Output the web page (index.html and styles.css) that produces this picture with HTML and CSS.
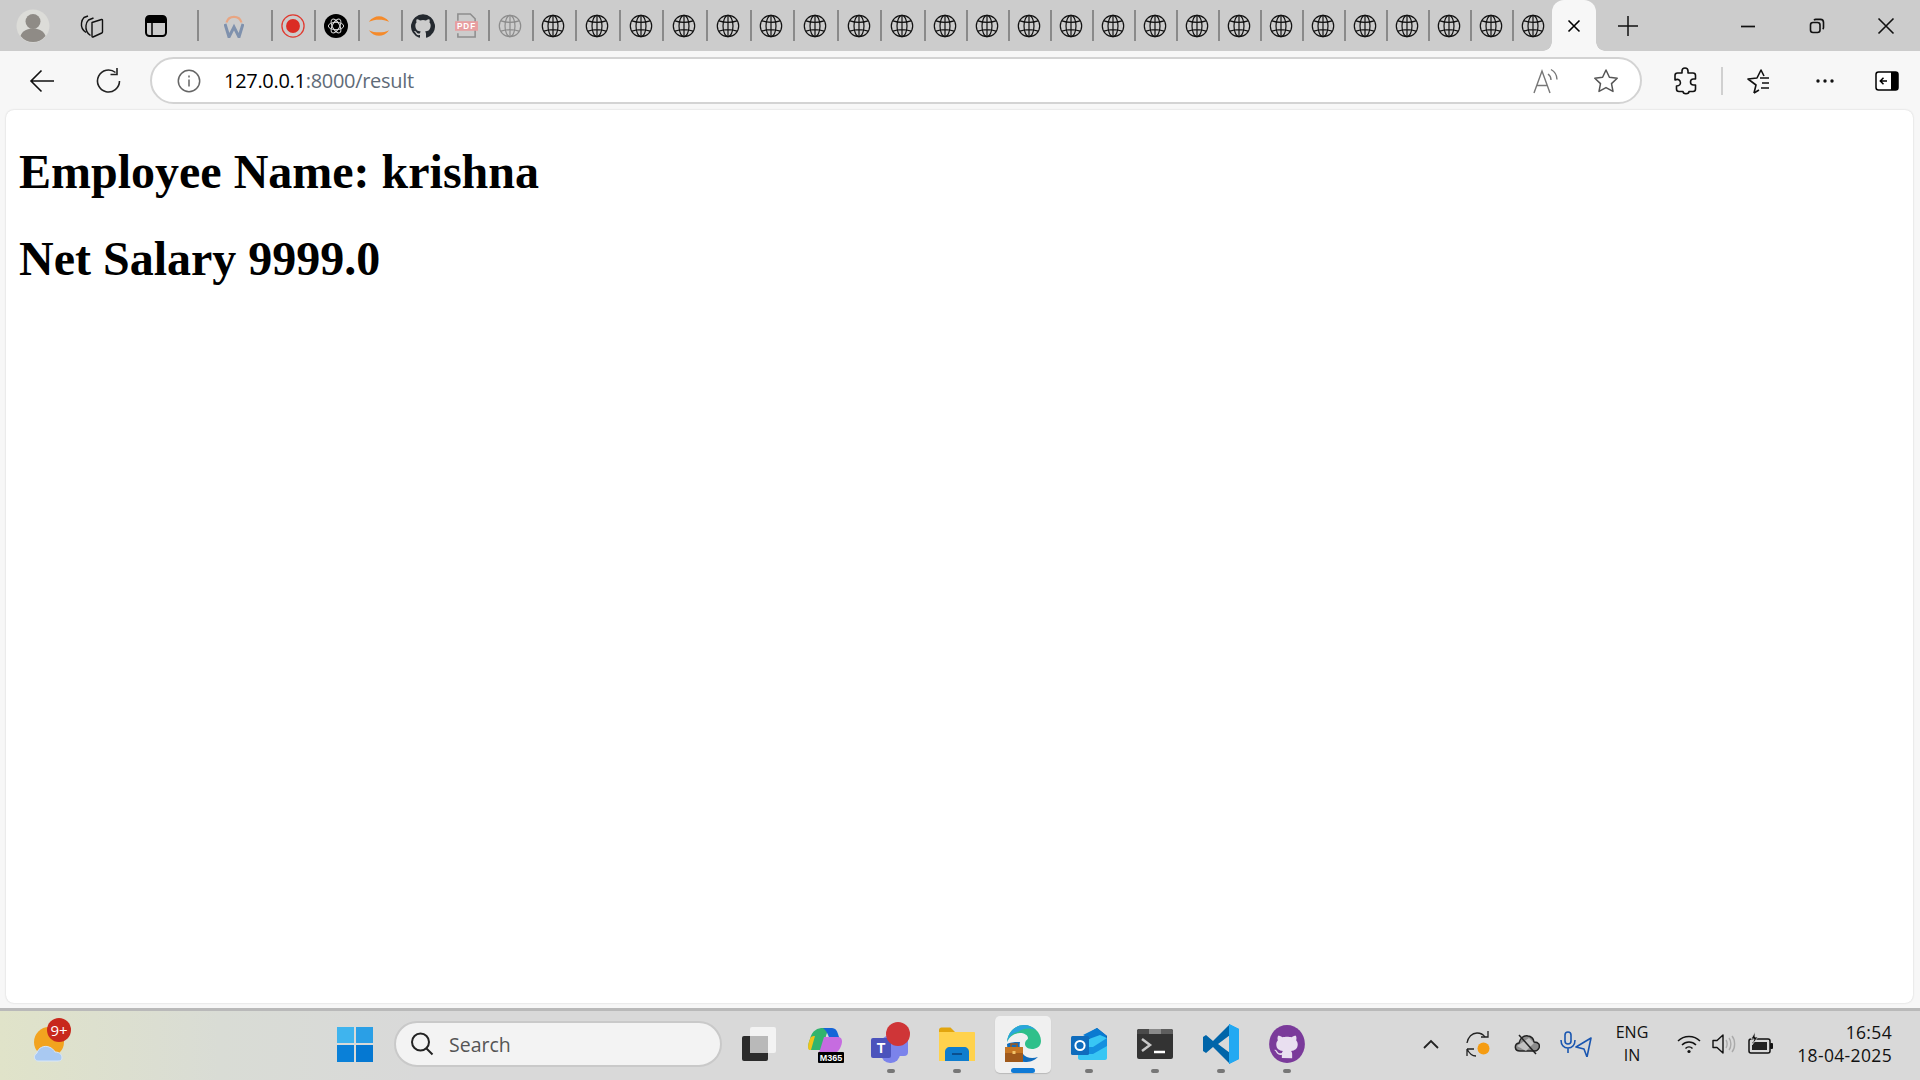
FILE: index.html
```html
<!DOCTYPE html>
<html lang="en">
<head>
<meta charset="utf-8">
<title>127.0.0.1:8000/result</title>
<link rel="stylesheet" href="styles.css">
</head>
<body>
<svg class="defs" width="0" height="0" aria-hidden="true">
  <symbol id="globe" viewBox="0 0 26 26"><g fill="none" stroke="currentColor" stroke-width="1.300"><circle cx="13" cy="13" r="11.600"/><ellipse cx="13" cy="13" rx="5.400" ry="11.600"/><path d="M3.200 7.500c6 2 13.600 2 19.600 0M3.200 18.500c6-2 13.600-2 19.600 0M13 1.500v23"/></g></symbol>
</svg>
<div class="browser">
  <header class="tabbar">
    <span class="avatar"><svg width="34" height="34" viewBox="0 0 34 34"><circle cx="17" cy="17" r="16.500" fill="#dcdcd8"/><circle cx="17" cy="12.500" r="7.500" fill="#8f8b86"/><path d="M4.500 27c2-5.500 7-7.500 12.500-7.500s10.500 2 12.500 7.500a16 16 0 0 1-25 0z" fill="#8f8b86"/></svg></span>
    <span class="side-btn"><svg width="26" height="26" viewBox="0 0 26 26" fill="none" stroke="#111" stroke-width="1.400" stroke-linejoin="round"><path d="M7 19.500C4 17.500 2 14 2.500 10c.3-2.500 1-4 2.500-5.500l4-1.500"/><path d="M11.500 22.500C8.500 20.500 6.500 17 7 12.500c.3-2.500 1-4 2.500-5.500l5-2"/><path d="M13 9.500l9.500-3c.6-.2 1 .1 1 .7V19c0 .5-.2.8-.7 1L14 24c-.6.200-1 0-1-.7V10.500c0-.5 0-.8 0-1z"/></svg></span>
    <span class="side-btn"><svg width="24" height="24" viewBox="0 0 24 24"><rect x="2" y="2" width="20" height="20" rx="3.500" fill="none" stroke="#000" stroke-width="2"/><path d="M5 2h14a3 3 0 0 1 3 3v4H2V5a3 3 0 0 1 3-3z" fill="#000"/><path d="M8 8v14" stroke="#000" stroke-width="1.500"/></svg></span>
    <div class="tabs">
      <span class="tab tab-first"><svg width="20" height="24" viewBox="0 0 20 24"><path d="M2.500 8.500a7.800 7.800 0 0 1 15 0" fill="none" stroke="#e8a582" stroke-width="2.200"/><path d="M1 10l4 13 5-10 5 10 4-13" fill="none" stroke="#7f91ad" stroke-width="3"/></svg></span>
      <span class="tab tab-wide"><svg width="24" height="24" viewBox="0 0 26 26"><circle cx="13" cy="13" r="12" fill="none" stroke="#e03a30" stroke-width="1.400"/><circle cx="13" cy="13" r="7.500" fill="#db2c24"/></svg></span>
      <span class="tab tab-wide"><svg width="24" height="24" viewBox="0 0 25 25"><circle cx="12.500" cy="12.500" r="12.500" fill="#000"/><g fill="none" stroke="#dcdcdc" stroke-width="1"><ellipse cx="12.500" cy="12.500" rx="8" ry="3.800"/><ellipse cx="12.500" cy="12.500" rx="8" ry="3.800" transform="rotate(60 12.500 12.500)"/><ellipse cx="12.500" cy="12.500" rx="8" ry="3.800" transform="rotate(120 12.500 12.500)"/></g></svg></span>
      <span class="tab tab-wide"><svg width="24" height="24" viewBox="0 0 26 26"><path d="M2 8.500C5 4.500 9 2.500 13 2.500s8 2 11 6C20.500 6.800 17 6.200 13 6.200S5.500 6.800 2 8.500z" fill="#f58a2a"/><path d="M2 17.500C5 21.500 9 23.500 13 23.500s8-2 11-6C20.500 19.200 17 19.800 13 19.800S5.500 19.200 2 17.500z" fill="#f58a2a"/></svg></span>
      <span class="tab tab-wide"><svg width="24" height="24" viewBox="0 0 16 16"><path fill="#24292f" d="M8 .2a8 8 0 0 0-2.500 15.600c.4.100.5-.2.500-.4v-1.400c-2.200.5-2.700-1-2.700-1-.4-.9-.9-1.200-.9-1.200-.7-.5.100-.5.100-.5.800.1 1.200.8 1.200.8.700 1.200 1.900.9 2.300.7.100-.5.300-.9.500-1.100-1.800-.2-3.600-.9-3.600-4 0-.9.300-1.600.8-2.100-.1-.2-.4-1 .1-2.100 0 0 .7-.2 2.200.8a7.600 7.600 0 0 1 4 0c1.500-1 2.200-.8 2.200-.8.500 1.100.2 1.900.1 2.100.5.500.8 1.200.8 2.100 0 3.100-1.900 3.800-3.700 4 .3.300.6.800.6 1.500v2.200c0 .2.100.5.500.4A8 8 0 0 0 8 .2z"/></svg></span>
      <span class="tab tab-wide"><svg width="23" height="25" viewBox="0 0 24 26"><path d="M3 8V1h13l5 5v19H3v-4" fill="none" stroke="#8d8d8d" stroke-width="1.600"/><rect x="0" y="8.500" width="24" height="10" fill="#e79ea0"/><text x="12" y="16.500" text-anchor="middle" class="pdf-text">PDF</text></svg></span>
      <span class="tab tab-globe globe-dim"><svg class="globe"><use href="#globe"/></svg></span>
      <span class="tab tab-globe"><svg class="globe"><use href="#globe"/></svg></span>
      <span class="tab tab-globe"><svg class="globe"><use href="#globe"/></svg></span>
      <span class="tab tab-globe"><svg class="globe"><use href="#globe"/></svg></span>
      <span class="tab tab-globe"><svg class="globe"><use href="#globe"/></svg></span>
      <span class="tab tab-globe"><svg class="globe"><use href="#globe"/></svg></span>
      <span class="tab tab-globe"><svg class="globe"><use href="#globe"/></svg></span>
      <span class="tab tab-globe"><svg class="globe"><use href="#globe"/></svg></span>
      <span class="tab tab-globe"><svg class="globe"><use href="#globe"/></svg></span>
      <span class="tab tab-globe"><svg class="globe"><use href="#globe"/></svg></span>
      <span class="tab"><svg class="globe"><use href="#globe"/></svg></span>
      <span class="tab"><svg class="globe"><use href="#globe"/></svg></span>
      <span class="tab"><svg class="globe"><use href="#globe"/></svg></span>
      <span class="tab"><svg class="globe"><use href="#globe"/></svg></span>
      <span class="tab"><svg class="globe"><use href="#globe"/></svg></span>
      <span class="tab"><svg class="globe"><use href="#globe"/></svg></span>
      <span class="tab"><svg class="globe"><use href="#globe"/></svg></span>
      <span class="tab"><svg class="globe"><use href="#globe"/></svg></span>
      <span class="tab"><svg class="globe"><use href="#globe"/></svg></span>
      <span class="tab"><svg class="globe"><use href="#globe"/></svg></span>
      <span class="tab"><svg class="globe"><use href="#globe"/></svg></span>
      <span class="tab"><svg class="globe"><use href="#globe"/></svg></span>
      <span class="tab"><svg class="globe"><use href="#globe"/></svg></span>
      <span class="tab"><svg class="globe"><use href="#globe"/></svg></span>
      <span class="tab"><svg class="globe"><use href="#globe"/></svg></span>
      <span class="tab-active"><svg width="14" height="14" viewBox="0 0 14 14"><path d="M1.500 1.500l11 11M12.500 1.500l-11 11" stroke="#000" stroke-width="1.600"/></svg></span>
      <span class="newtab"><svg width="22" height="22" viewBox="0 0 22 22"><path d="M11 1v20M1 11h20" stroke="#111" stroke-width="1.500"/></svg></span>
    </div>
    <div class="winctl">
      <span class="winbtn"><svg width="16" height="16" viewBox="0 0 16 16"><path d="M1 8.500h14" stroke="#111" stroke-width="1.700"/></svg></span>
      <span class="winbtn"><svg width="16" height="16" viewBox="0 0 16 16" fill="none" stroke="#111" stroke-width="1.600"><rect x="1.500" y="4.500" width="9.500" height="10" rx="2.500"/><path d="M5 2.200c.5-.6 1-.8 1.800-.8h4.700c1.800 0 3 1.200 3 3v5c0 .8-.3 1.300-.8 1.700"/></svg></span>
      <span class="winbtn"><svg width="18" height="18" viewBox="0 0 18 18"><path d="M1.500 1.500l15 15M16.500 1.500l-15 15" stroke="#111" stroke-width="1.600"/></svg></span>
    </div>
  </header>

  <nav class="toolbar">
    <span class="tool tool-back"><svg width="26" height="24" viewBox="0 0 26 24" fill="none" stroke="#111" stroke-width="1.600"><path d="M25 12H2M12.500 1.500L2 12l10.500 10.500"/></svg></span>
    <span class="tool tool-reload"><svg width="26" height="26" viewBox="0 0 26 26" fill="none" stroke="#222" stroke-width="1.600"><path d="M23.500 13A11 11 0 1 1 19.500 4.500"/><path d="M21 0v6.500h-6.500"/></svg></span>
    <div class="addr">
      <svg class="addr-info" width="24" height="24" viewBox="0 0 24 24" fill="none" stroke="#666" stroke-width="1.500"><circle cx="12" cy="12" r="10.700"/><path d="M12 10.500v7M12 6.500v2"/></svg>
      <span class="url"><span class="url-host">127.0.0.1</span>:8000/result</span>
      <svg class="addr-read" width="28" height="26" viewBox="0 0 28 26" fill="none" stroke="#777" stroke-width="1.400"><path d="M2 25L10 3l8 22M5 17.500h10"/><path d="M16 6c2 1.500 3 3.500 3 6M19 1.500c3.500 2 6 5.500 6 10"/></svg>
      <svg class="addr-star" width="26" height="26" viewBox="0 0 26 26" fill="none" stroke="#555" stroke-width="1.500" stroke-linejoin="round"><path d="M13 2l3.400 7.200 7.800 1-5.700 5.400 1.500 7.800L13 19.600l-7 3.800 1.500-7.800L1.800 10.200l7.800-1z"/></svg>
    </div>
    <span class="tool tool-ext"><svg width="24" height="28" viewBox="0 0 24 28" fill="none" stroke="#111" stroke-width="1.600" stroke-linejoin="round"><path d="M9 4c0-4 6-4 6 0v2h5c1.500 0 2.500 1 2.500 2.500V12h-2c-4 0-4 6 0 6h2v4c0 1.500-1 2.500-2.500 2.500H16c0 3-6 3-6 0H6c-1.500 0-2.500-1-2.500-2.500v-3c3 0 5-2 3.500-5-1-1.500-3-2-5-1V8.500C2 7 3 6 4.500 6H9z"/></svg></span>
    <span class="tool-sep"></span>
    <span class="tool tool-fav"><svg width="26" height="28" viewBox="0 0 26 28" fill="none" stroke="#111" stroke-width="1.600" stroke-linejoin="round"><path d="M9 26l2-8-8-6 9-1 4-8 3 6"/><path d="M9 26l5-3M15 11h9M17 16h7M16 21h8"/></svg></span>
    <span class="tool tool-more"><svg width="20" height="4" viewBox="0 0 20 4"><circle cx="3" cy="2" r="1.700" fill="#111"/><circle cx="10" cy="2" r="1.700" fill="#111"/><circle cx="17" cy="2" r="1.700" fill="#111"/></svg></span>
    <span class="tool tool-side"><svg width="24" height="20" viewBox="0 0 24 20"><rect x="1" y="1" width="22" height="18" rx="2.500" fill="#fff" stroke="#000" stroke-width="1.500"/><path d="M16 1h5a2 2 0 0 1 2 2v14a2 2 0 0 1-2 2h-5z" fill="#000"/><path d="M12 10H5.500M8.500 6.800L5.300 10l3.200 3.200" fill="none" stroke="#000" stroke-width="1.500"/></svg></span>
  </nav>

  <main class="content">
    <h1 class="line">Employee Name: krishna</h1>
    <h1 class="line">Net Salary 9999.0</h1>
  </main>

  <footer class="taskbar">
    <div class="weather">
      <svg width="40" height="46" viewBox="0 0 40 46"><circle cx="17" cy="22" r="15" fill="#f2a31f"/><path d="M6 41c-4 0-5-6-1-8 1-5 7-8 12-6 3 1 5 3 6 5 5 0 7 3 7 6 0 2-2 3-4 3z" fill="#a9c9f2" stroke="#d7e7fb" stroke-width="1"/></svg>
      <span class="badge">9+</span>
    </div>
    <div class="task-center">
      <span class="winlogo"><svg width="36" height="36" viewBox="0 0 36 36"><path d="M0 1h17v16H0z" fill="#3fb4ee"/><path d="M19 1h17v16H19z" fill="#2a9fe6"/><path d="M0 19h17v17H0z" fill="#0a80d8"/><path d="M19 19h17v17H19z" fill="#0578d2"/></svg></span>
      <div class="search">
        <svg width="24" height="24" viewBox="0 0 24 24" fill="none" stroke="#222" stroke-width="2"><circle cx="10.500" cy="10" r="8.500"/><path d="M16.500 16.500l6 6"/></svg>
        <span class="search-text">Search</span>
      </div>
      <div class="apps">
        <span class="app"><svg width="36" height="36" viewBox="0 0 36 36"><rect x="9" y="1" width="26" height="26" rx="2" fill="#f3f3f3"/><rect x="1" y="10" width="26" height="25" rx="2" fill="#2b2b2b"/><rect x="9" y="10" width="18" height="17" fill="#b9b9b9"/></svg></span>
        <span class="app"><svg width="38" height="38" viewBox="0 0 38 38"><path d="M4 14C6 5 12 3 17 3h10c-4 1-6 4-7 8l-4 14H5c-4 0-3-6-1-11z" fill="#31b46d"/><path d="M17 3h9c3 0 5 2 6 6l2 6H24C22 9 20 5 17 3z" fill="#1565d8"/><path d="M14 25l4-13h14c4 0 5 4 3 9-2 6-6 8-11 8H12z" fill="#c66ce0"/><path d="M4 14c1-3 3-3 5-3l-4 14H3c-2-3 0-8 1-11z" fill="#f0c419"/><rect x="12" y="27" width="26" height="11" rx="1" fill="#000"/><text x="25" y="36" text-anchor="middle" class="m365">M365</text></svg></span>
        <span class="app app-open"><svg width="42" height="44" viewBox="0 0 42 44"><circle cx="29" cy="22" r="6" fill="#5b5fc7"/><rect x="22" y="16" width="16" height="18" rx="4" fill="#7b83eb"/><rect x="11" y="13" width="19" height="28" rx="9" fill="#7b83eb"/><rect x="1" y="16" width="20" height="20" rx="2" fill="#4b53bc"/><text x="11" y="31" text-anchor="middle" class="teams-t">T</text><circle cx="28" cy="12" r="12" fill="#cf3537"/></svg></span>
        <span class="app app-open"><svg width="36" height="34" viewBox="0 0 36 34"><path d="M0 3c0-1.500 1-2.500 2.500-2.500h9L16 5H0z" fill="#e2a50e"/><path d="M0 5h35c.5 0 1 .5 1 1v28H0z" fill="#ffd24d"/><path d="M6 34v-9c0-3 2-5 5-5h14c3 0 5 2 5 5v9z" fill="#0f7dce"/><path d="M13 27h10" stroke="#0a4f8f" stroke-width="2"/></svg></span>
        <span class="app app-active"><svg width="36" height="40" viewBox="0 0 36 40"><path d="M2 18C3 7 11 1 19 1c9 0 17 7 17 16 0 6-5 8-9 8-5 0-7-3-7-5 0-4 3-4 3-6 0-3-4-5-8-5-6 0-11 4-13 9z" fill="#2fc08a"/><path d="M2 18C3 7 11 1 19 1c5 0 9 2 12 5-8-3-14-1-18 2-6 1-9 5-11 10z" fill="#2aa5dc"/><path d="M2 20c0 10 8 18 18 18 5 0 9-1 13-5-6 2-12 1-15-3-3-3-4-7-3-12-4 0-10 0-13 2z" fill="#0f6cbd"/><path d="M0 23h18v15H0z" fill="#a0591b"/><path d="M0 23h18v6H0z" fill="#c67623"/><path d="M6 23v-3h6v3" fill="none" stroke="#a0591b" stroke-width="1.500"/><rect x="7.500" y="27" width="3" height="3" fill="#f2c36b"/></svg><i class="active-bar"></i></span>
        <span class="app app-open"><svg width="36" height="34" viewBox="0 0 36 34"><path d="M7 13L26 1l10 8v12z" fill="#0f5fa8"/><path d="M26 1l10 8-10 6L12 8z" fill="#0a7ad1"/><path d="M7 16l22-8 7 3v20c0 1-1 2-2 2H9c-1 0-2-1-2-2z" fill="#38c6f4"/><path d="M7 20h15l14-9v8L22 27H7z" fill="#1490df"/><rect x="0" y="9" width="18" height="19" rx="1.500" fill="#0f6cbd"/><circle cx="9" cy="18.500" r="4.600" fill="none" stroke="#fff" stroke-width="2"/></svg></span>
        <span class="app app-open"><svg width="36" height="30" viewBox="0 0 36 30"><rect width="36" height="30" rx="2" fill="#333"/><path d="M0 2c0-1 1-2 2-2h10v5H0z" fill="#4a4a4a"/><path d="M12 0h12v5H12z" fill="#8a8a8a"/><path d="M24 0h10c1 0 2 1 2 2v3H24z" fill="#5e5e5e"/><path d="M5 10l8 6-8 6" fill="none" stroke="#c7c7c7" stroke-width="2.500"/><path d="M17 23h11" stroke="#fff" stroke-width="2.500"/></svg></span>
        <span class="app app-open"><svg width="36" height="40" viewBox="0 0 36 40"><path d="M26 0l10 5v30l-10 5z" fill="#1f9cf0"/><path d="M27 0L10 17 3 11 0 13v14l3 2 7-6 17 17V29L15 20 27 11z" fill="#0065a9"/><path d="M26 0l10 5v30l-10 5V0z" fill="#23a9f2"/></svg></span>
        <span class="app app-open"><svg width="36" height="38" viewBox="0 0 16 17"><ellipse cx="8" cy="8.500" rx="8" ry="8.500" fill="#7a3a9a"/><path fill="#e9dff0" d="M5.700 14.800v-1.500c-1.700.4-2.300-.7-2.500-1.100-.2-.4-.5-.7-.8-.9-.2-.2.300-.3.600-.1.500.3.800.9 1 1.100.5.500 1.200.4 1.700.2.100-.4.300-.7.500-.9-1.700-.2-3-.9-3-3 0-.7.300-1.300.7-1.800-.1-.3-.3-1 .1-2 0 0 .7-.2 2 .7.500-.1 1.300-.2 2-.2s1.500.1 2 .2c1.300-.9 2-.7 2-.7.400 1 .2 1.700.1 2 .4.500.7 1.100.7 1.800 0 2.100-1.300 2.800-3 3 .3.300.5.700.5 1.300v2z"/></svg></span>
      </div>
    </div>
    <div class="tray">
      <span class="tray-ic tray-chev"><svg width="16" height="10" viewBox="0 0 16 10" fill="none" stroke="#222" stroke-width="1.800"><path d="M1 9l7-7 7 7"/></svg></span>
      <span class="tray-ic tray-sync"><svg width="26" height="26" viewBox="0 0 26 26" fill="none" stroke="#222" stroke-width="1.300"><path d="M1 12C2 6 6 2 11 2c3 0 6 1 8 4"/><path d="M22 0v6h-7"/><path d="M1 18h7M1 18v7M1 18c2 4 5 7 9 7"/><circle cx="17.500" cy="17.500" r="6" fill="#f59c12" stroke="none"/></svg></span>
      <span class="tray-ic tray-cloud"><svg width="26" height="24" viewBox="0 0 26 24"><path d="M6 19c-6 0-6-7-1-8 1-5 5-8 9-7 3 0 6 3 6 6 5 0 6 3 5 6-1 2-2 3-4 3z" fill="#8d8d8d" stroke="#222" stroke-width="1.500"/><path d="M3 14l12-8 5 5-8 8z" fill="#d9d9d9" opacity=".7"/><path d="M5 3l17 19" stroke="#222" stroke-width="1.500"/></svg></span>
      <span class="tray-ic tray-mic"><svg width="32" height="26" viewBox="0 0 32 26" fill="none" stroke="#1a56b0" stroke-width="1.600" stroke-linejoin="round"><rect x="5" y="1" width="6" height="12" rx="3"/><path d="M1 9c0 5 3 8 7 8s7-3 7-8M8 17v5"/><path d="M31 7L16 16l8 2 3 8z"/></svg></span>
      <div class="lang"><span>ENG</span><span>IN</span></div>
      <span class="tray-ic tray-wifi"><svg width="24" height="20" viewBox="0 0 24 20" fill="none" stroke="#111" stroke-width="1.500"><path d="M1 7c6-6 16-6 22 0M5 11c4-4 10-4 14 0M8.500 14.500c2-2 5-2 7 0"/><circle cx="12" cy="17.500" r="1.600" fill="#111" stroke="none"/></svg></span>
      <span class="tray-ic tray-vol"><svg width="24" height="20" viewBox="0 0 24 20" fill="none" stroke="#111" stroke-width="1.400" stroke-linejoin="round"><path d="M1 6.500h4L11 1v18l-6-5.500H1z"/><path d="M14 6c1.500 2 1.500 6 0 8M17 4c2.500 3 2.500 9 0 12M20 2c3.500 4 3.500 12 0 16" stroke="#aaa"/></svg></span>
      <span class="tray-ic tray-bat"><svg width="26" height="24" viewBox="0 0 26 24"><rect x="1" y="7" width="21" height="14" rx="2" fill="#d9d9d9" stroke="#111" stroke-width="1.500"/><rect x="4" y="10" width="15" height="8" fill="#222"/><rect x="22" y="11" width="3" height="6" rx="1" fill="#111"/><path d="M7 0L3 7h3l-2 6 6-8H7z" fill="#111" stroke="#d9d9d9" stroke-width=".8"/></svg></span>
      <div class="clock"><span>16:54</span><span>18-04-2025</span></div>
    </div>
  </footer>
</div>
</body>
</html>
```

FILE: styles.css
```css
* { box-sizing: border-box; }
html, body { margin: 0; height: 100%; }
body { overflow: hidden; background: #f7f7f7; font-family: "Open Sans", "Noto Sans", sans-serif; }
.defs { position: absolute; }
.browser { display: flex; flex-direction: column; height: 1080px; }

/* tab strip */
.tabbar { display: flex; align-items: center; height: 51px; flex: none; background: #cccccc; padding-left: 16px; }
.avatar { display: flex; width: 34px; height: 34px; }
.side-btn { display: flex; align-items: center; justify-content: center; width: 62px; height: 51px; }
.side-btn:nth-child(2) { margin-left: 11px; }
.side-btn:nth-child(3) { margin-left: 2px; }
.tabs { display: flex; align-items: center; height: 51px; margin-left: 10px; flex: none; }
.tab { display: flex; align-items: center; justify-content: center; width: 42px; height: 31px; padding-right: 2px; border-left: 2px solid #8a8a8a; }
.tab-first { width: 74px; }
.tab-wide { width: 43.4px; }
.tab-globe { width: 43.6px; }
.globe { width: 24px; height: 24px; color: #111; }
.globe-dim .globe { color: #8c8c8c; }
.pdf-text { font: bold 8.500px "Liberation Sans", sans-serif; fill: #fff; letter-spacing: 1px; }
.tab-active { position: relative; display: flex; align-items: center; justify-content: center; width: 44px; height: 51px; margin-left: -2px; background: #f7f7f7; border-radius: 12px 12px 0 0; }
.tab-active::before, .tab-active::after { content: ""; position: absolute; bottom: 0; width: 9px; height: 9px; }
.tab-active::before { left: -9px; background: radial-gradient(circle at 0 0, #ccc 8.500px, #f7f7f7 9px); }
.tab-active::after { right: -9px; background: radial-gradient(circle at 100% 0, #ccc 8.500px, #f7f7f7 9px); }
.newtab { display: flex; align-items: center; justify-content: center; width: 22px; margin-left: 21px; }
.winctl { display: flex; margin-left: auto; }
.winbtn { display: flex; align-items: center; justify-content: center; width: 69px; height: 51px; }

/* toolbar */
.toolbar { display: flex; align-items: center; height: 59px; flex: none; background: #f7f7f7; }
.tool { display: flex; align-items: center; justify-content: center; }
.tool-back { width: 26px; margin-left: 29px; }
.tool-reload { width: 26px; margin-left: 41px; }
.addr { display: flex; align-items: center; width: 1492px; height: 47px; margin-left: 28px; background: #fff; border: 2px solid #d3d3d3; border-radius: 24px; }
.addr-info { margin-left: 25px; }
.url { margin-left: 23px; font-size: 20px; color: #5f6b78; letter-spacing: -.3px; }
.url-host { color: #000; }
.addr-read { margin-left: auto; }
.addr-star { margin-left: 33px; margin-right: 21px; }
.tool-ext { width: 24px; margin-left: 31px; }
.tool-sep { width: 2px; height: 28px; margin-left: 24px; background: #d0d0d0; }
.tool-fav { width: 26px; margin-left: 22px; }
.tool-more { width: 20px; margin-left: 44px; }
.tool-side { width: 24px; margin-left: 40px; }

/* page */
.content { flex: 1; margin: 0 7px 5px 6px; padding: 0 13px; background: #fff; border-radius: 8px; box-shadow: 0 0 2px rgba(0,0,0,.18); overflow: hidden; }
.line { margin: 0 0 32px; font: bold 48px/55px "Liberation Serif", "Times New Roman", serif; color: #000; }
.line:first-child { margin-top: 34px; }

/* taskbar */
.taskbar { display: flex; align-items: center; height: 72px; flex: none; padding-bottom: 3px; border-top: 3px solid #b9b9b9; background: linear-gradient(90deg, #e0e3c9 0, #d9dcd5 220px, #d9d9d9 420px); }
.weather { position: relative; display: flex; width: 40px; margin-left: 32px; margin-top: -2px; }
.badge { position: absolute; left: 15px; top: -2px; width: 24px; height: 24px; border-radius: 50%; background: #c8281c; color: #fff; font-size: 15px; line-height: 24px; text-align: center; }
.task-center { display: flex; align-items: center; margin-left: 265px; }
.winlogo { display: flex; }
.search { display: flex; align-items: center; width: 328px; height: 46px; margin-left: 21px; padding-left: 14px; background: #f3f3f3; border: 2px solid #c9c9c9; border-radius: 23px; }
.search-text { margin-left: 15px; font-size: 19.500px; color: #555; }
.apps { display: flex; align-items: center; margin-left: 4px; }
.app { position: relative; display: flex; align-items: center; justify-content: center; width: 66px; height: 57px; }
.app-open::after { content: ""; position: absolute; left: 29px; bottom: 0; width: 8px; height: 4px; border-radius: 2px; background: #777; }
.app-active { width: 56px; margin: 0 5px; background: #f0f0f0; border-radius: 5px; box-shadow: 0 1px 1px rgba(0,0,0,.15); }
.active-bar { position: absolute; left: 16px; bottom: 0; width: 24px; height: 5px; border-radius: 3px; background: #0f7ad6; }
.m365 { font: bold 9px "Liberation Sans", sans-serif; fill: #fff; }
.teams-t { font: bold 14px "Liberation Sans", sans-serif; fill: #fff; }
.tray { display: flex; align-items: center; margin-left: auto; padding-right: 28px; font-size: 16px; color: #111; }
.tray-ic { display: flex; align-items: center; justify-content: center; }
.tray-chev { width: 16px; }
.tray-sync { width: 26px; margin-left: 27px; }
.tray-cloud { width: 26px; margin-left: 22px; }
.tray-mic { width: 32px; margin-left: 20px; }
.lang { display: flex; flex-direction: column; align-items: center; width: 40px; margin-left: 20px; line-height: 23px; }
.tray-wifi { width: 24px; margin-left: 25px; }
.tray-vol { width: 24px; margin-left: 11px; }
.tray-bat { width: 26px; margin-left: 12px; }
.clock { display: flex; flex-direction: column; align-items: flex-end; width: 100px; margin-left: 18px; font-size: 17.500px; line-height: 23px; letter-spacing: .35px; }
```
